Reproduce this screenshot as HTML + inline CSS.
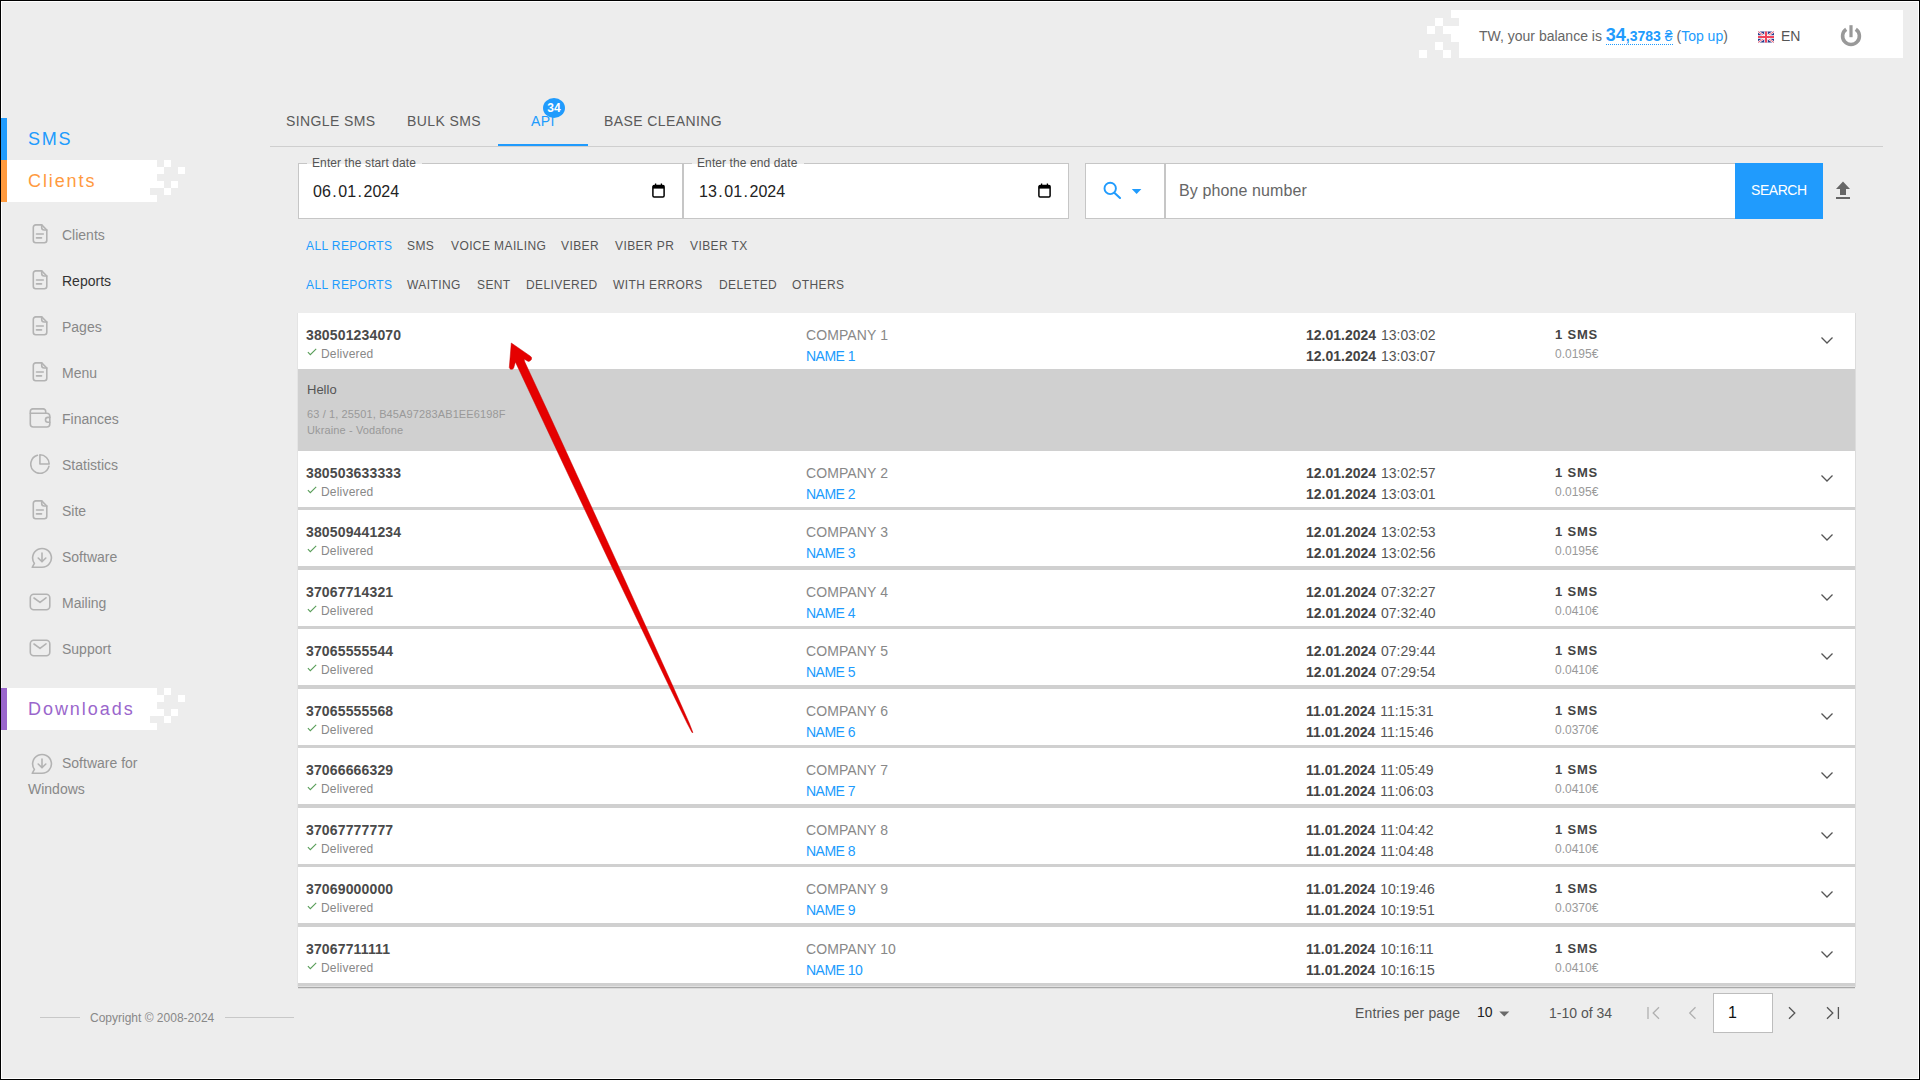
<!DOCTYPE html>
<html><head><meta charset="utf-8"><title>Reports</title>
<style>
*{margin:0;padding:0;box-sizing:border-box}
html,body{width:1920px;height:1080px;overflow:hidden;background:#ededed;font-family:"Liberation Sans",sans-serif}
.a{position:absolute}
.t{position:absolute;white-space:nowrap;line-height:1}
.frame{position:absolute;left:0;top:0;width:1920px;height:1080px;border:1px solid #000;pointer-events:none;z-index:50}
.bar{z-index:60}
.frame2{position:absolute;left:1px;top:1px;width:1918px;height:1078px;border:1px solid #fff;pointer-events:none;z-index:50}
.w{position:absolute;background:#fff}
.blue{color:#209bfd}
.menu{font-size:14px;color:#888}
.tab{font-size:14px;color:#5a5a5a;letter-spacing:.4px}
.flt{font-size:12px;color:#555;letter-spacing:.4px}
.row{position:absolute;left:298px;width:1557px;height:56px;background:#fff}
.sep{position:absolute;left:298px;width:1557px;height:3.5px;background:#d0d0d0}
.ph{font-size:14px;font-weight:bold;color:#4a4a4a;letter-spacing:.15px}
.dl{font-size:12px;color:#888;letter-spacing:.2px}
.co{font-size:14px;color:#888;letter-spacing:.1px}
.nm{font-size:14px;color:#209bfd;letter-spacing:-.5px}
.dt{font-size:14px;color:#555}
.dt b{color:#444}
.sm{font-size:13px;font-weight:bold;color:#444;letter-spacing:.8px}
.pr{font-size:12px;color:#999}
</style></head><body>
<div class="frame"></div><div class="frame2"></div>
<!-- top right balance -->
<div class="w" style="left:1459px;top:10px;width:444px;height:48px"></div>
<div class="w" style="left:1451px;top:10px;width:8px;height:8px"></div>
<div class="w" style="left:1435px;top:18px;width:8px;height:8px"></div>
<div class="w" style="left:1427px;top:26px;width:8px;height:8px"></div>
<div class="w" style="left:1443px;top:26px;width:16px;height:8px"></div>
<div class="w" style="left:1451px;top:34px;width:8px;height:8px"></div>
<div class="w" style="left:1435px;top:42px;width:8px;height:8px"></div>
<div class="w" style="left:1419px;top:50px;width:8px;height:8px"></div>
<div class="w" style="left:1443px;top:50px;width:8px;height:8px"></div>
<div class="t" style="left:1479px;top:28px;font-size:14px;line-height:14px;color:#666">TW, your balance is <span style="color:#209bfd;border-bottom:1px dotted #209bfd;padding-bottom:0"><b style="font-size:18px">34</b><b>,3783</b> ₴</span> (<span style="color:#209bfd">Top up</span>)</div>
<svg class="a" style="left:1758px;top:31px" width="16" height="12" viewBox="0 0 16 12">
<rect x="0" y="0.5" width="16" height="11" fill="#2b3a8c"/>
<path d="M0,0.5 L16,11.5 M16,0.5 L0,11.5" stroke="#fff" stroke-width="2.2"/>
<path d="M0,0.5 L16,11.5 M16,0.5 L0,11.5" stroke="#e8435a" stroke-width="0.8"/>
<path d="M8,0.5 V11.5 M0,6 H16" stroke="#fff" stroke-width="3.5"/>
<path d="M8,0.5 V11.5 M0,6 H16" stroke="#f0435a" stroke-width="2"/>
</svg>
<div class="t" style="left:1781px;top:29px;font-size:14px;color:#555">EN</div>
<svg class="a" style="left:1839px;top:23px" width="24" height="25" viewBox="0 0 24 25">
<path d="M7.2,6.2 A8.4,8.4 0 1 0 16.8,6.2" fill="none" stroke="#999" stroke-width="3.6"/>
<path d="M12,2.2 V14.2" stroke="#999" stroke-width="3.2"/>
</svg>

<!-- sidebar -->
<div class="a bar" style="left:1px;top:118px;width:6px;height:42px;background:#209bfd"></div>
<div class="t" style="left:28px;top:130px;font-size:18px;letter-spacing:1.8px;color:#209bfd">SMS</div>
<div class="a bar" style="left:1px;top:160px;width:6px;height:42px;background:#ff9a3e"></div>
<div class="w" style="left:7px;top:160px;width:150px;height:28px"></div>
<div class="w" style="left:7px;top:188px;width:143px;height:7px"></div>
<div class="w" style="left:7px;top:195px;width:150px;height:7px"></div>
<div class="w" style="left:164px;top:160px;width:7px;height:7px"></div>
<div class="w" style="left:157px;top:167px;width:7px;height:7px"></div>
<div class="w" style="left:178px;top:167px;width:7px;height:7px"></div>
<div class="w" style="left:157px;top:181px;width:7px;height:7px"></div>
<div class="w" style="left:171px;top:181px;width:7px;height:7px"></div>
<div class="w" style="left:164px;top:188px;width:7px;height:7px"></div>
<div class="t" style="left:28px;top:172px;font-size:18px;letter-spacing:1.9px;color:#ff9a3e">Clients</div>
<svg class="a" style="left:32px;top:224px" width="16" height="20" viewBox="0 0 16 20"><g fill="none" stroke="#b3b3b3" stroke-width="1.6" stroke-linecap="round" stroke-linejoin="round"><path d="M1.3,3.4 A2.5,2.5 0 0 1 3.8,0.9 H9.7 L14.8,6 V16.2 A2.5,2.5 0 0 1 12.3,18.7 H3.8 A2.5,2.5 0 0 1 1.3,16.2 Z"/><path d="M9.7,0.9 V3.5 A2.5,2.5 0 0 0 12.2,6 H14.8"/><path d="M4.5,10 H11.3 M4.5,13.9 H9.5"/></g></svg>
<div class="t menu" style="left:62px;top:228px;color:#888">Clients</div>
<svg class="a" style="left:32px;top:270px" width="16" height="20" viewBox="0 0 16 20"><g fill="none" stroke="#b3b3b3" stroke-width="1.6" stroke-linecap="round" stroke-linejoin="round"><path d="M1.3,3.4 A2.5,2.5 0 0 1 3.8,0.9 H9.7 L14.8,6 V16.2 A2.5,2.5 0 0 1 12.3,18.7 H3.8 A2.5,2.5 0 0 1 1.3,16.2 Z"/><path d="M9.7,0.9 V3.5 A2.5,2.5 0 0 0 12.2,6 H14.8"/><path d="M4.5,10 H11.3 M4.5,13.9 H9.5"/></g></svg>
<div class="t menu" style="left:62px;top:274px;color:#333">Reports</div>
<svg class="a" style="left:32px;top:316px" width="16" height="20" viewBox="0 0 16 20"><g fill="none" stroke="#b3b3b3" stroke-width="1.6" stroke-linecap="round" stroke-linejoin="round"><path d="M1.3,3.4 A2.5,2.5 0 0 1 3.8,0.9 H9.7 L14.8,6 V16.2 A2.5,2.5 0 0 1 12.3,18.7 H3.8 A2.5,2.5 0 0 1 1.3,16.2 Z"/><path d="M9.7,0.9 V3.5 A2.5,2.5 0 0 0 12.2,6 H14.8"/><path d="M4.5,10 H11.3 M4.5,13.9 H9.5"/></g></svg>
<div class="t menu" style="left:62px;top:320px;color:#888">Pages</div>
<svg class="a" style="left:32px;top:362px" width="16" height="20" viewBox="0 0 16 20"><g fill="none" stroke="#b3b3b3" stroke-width="1.6" stroke-linecap="round" stroke-linejoin="round"><path d="M1.3,3.4 A2.5,2.5 0 0 1 3.8,0.9 H9.7 L14.8,6 V16.2 A2.5,2.5 0 0 1 12.3,18.7 H3.8 A2.5,2.5 0 0 1 1.3,16.2 Z"/><path d="M9.7,0.9 V3.5 A2.5,2.5 0 0 0 12.2,6 H14.8"/><path d="M4.5,10 H11.3 M4.5,13.9 H9.5"/></g></svg>
<div class="t menu" style="left:62px;top:366px;color:#888">Menu</div>
<svg class="a" style="left:29px;top:408px" width="22" height="20" viewBox="0 0 22 20"><g fill="none" stroke="#b3b3b3" stroke-width="1.6" stroke-linecap="round" stroke-linejoin="round"><path d="M1.3,5.2 V16 A3,3 0 0 0 4.3,19 H17.8 A3,3 0 0 0 20.8,16 V8 A3,3 0 0 0 17.8,5.2 H1.3"/><path d="M1.3,5.2 V3.4 A2.5,2.5 0 0 1 3.8,0.9 H14.2 A2.5,2.5 0 0 1 16.7,3.4 V5.2"/><path d="M20.8,9.4 H18.9 A2.4,2.4 0 0 0 18.9,14.2 H20.8"/></g></svg>
<div class="t menu" style="left:62px;top:412px;color:#888">Finances</div>
<svg class="a" style="left:30px;top:454px" width="20" height="20" viewBox="0 0 20 20"><g fill="none" stroke="#b3b3b3" stroke-width="1.6" stroke-linecap="round" stroke-linejoin="round"><path d="M7.4,1.3 A9.2,9.2 0 1 0 18.9,12.4"/><path d="M9.9,0.8 V10 H19.2 A9.3,9.3 0 0 0 9.9,0.8 Z"/></g></svg>
<div class="t menu" style="left:62px;top:458px;color:#888">Statistics</div>
<svg class="a" style="left:32px;top:500px" width="16" height="20" viewBox="0 0 16 20"><g fill="none" stroke="#b3b3b3" stroke-width="1.6" stroke-linecap="round" stroke-linejoin="round"><path d="M1.3,3.4 A2.5,2.5 0 0 1 3.8,0.9 H9.7 L14.8,6 V16.2 A2.5,2.5 0 0 1 12.3,18.7 H3.8 A2.5,2.5 0 0 1 1.3,16.2 Z"/><path d="M9.7,0.9 V3.5 A2.5,2.5 0 0 0 12.2,6 H14.8"/><path d="M4.5,10 H11.3 M4.5,13.9 H9.5"/></g></svg>
<div class="t menu" style="left:62px;top:504px;color:#888">Site</div>
<svg class="a" style="left:31px;top:547px" width="22" height="22" viewBox="0 0 22 22"><g fill="none" stroke="#b3b3b3" stroke-width="1.6" stroke-linecap="round" stroke-linejoin="round"><path d="M11,20.3 A9.4,9.4 0 1 0 3.4,16.4 L1.2,20.3 Z"/><path d="M11,6 V14.6 M7.2,11 L11,14.8 L14.8,11"/></g></svg>
<div class="t menu" style="left:62px;top:550px;color:#888">Software</div>
<svg class="a" style="left:29px;top:593px" width="22" height="18" viewBox="0 0 22 18"><g fill="none" stroke="#b3b3b3" stroke-width="1.6" stroke-linecap="round" stroke-linejoin="round"><rect x="1.3" y="1.2" width="19.5" height="15.6" rx="3.5"/><path d="M5,5 L11,9.4 L17,4.8"/></g></svg>
<div class="t menu" style="left:62px;top:596px;color:#888">Mailing</div>
<svg class="a" style="left:29px;top:639px" width="22" height="18" viewBox="0 0 22 18"><g fill="none" stroke="#b3b3b3" stroke-width="1.6" stroke-linecap="round" stroke-linejoin="round"><rect x="1.3" y="1.2" width="19.5" height="15.6" rx="3.5"/><path d="M5,5 L11,9.4 L17,4.8"/></g></svg>
<div class="t menu" style="left:62px;top:642px;color:#888">Support</div>
<div class="a bar" style="left:1px;top:688px;width:6px;height:42px;background:#9a66cc"></div>
<div class="w" style="left:7px;top:688px;width:150px;height:28px"></div>
<div class="w" style="left:7px;top:716px;width:143px;height:7px"></div>
<div class="w" style="left:7px;top:723px;width:150px;height:7px"></div>
<div class="w" style="left:164px;top:688px;width:7px;height:7px"></div>
<div class="w" style="left:157px;top:695px;width:7px;height:7px"></div>
<div class="w" style="left:178px;top:695px;width:7px;height:7px"></div>
<div class="w" style="left:157px;top:709px;width:7px;height:7px"></div>
<div class="w" style="left:171px;top:709px;width:7px;height:7px"></div>
<div class="w" style="left:164px;top:716px;width:7px;height:7px"></div>
<div class="t" style="left:28px;top:700px;font-size:18px;letter-spacing:1.95px;color:#9a66cc">Downloads</div>
<svg class="a" style="left:31px;top:753px" width="22" height="22" viewBox="0 0 22 22"><g fill="none" stroke="#b3b3b3" stroke-width="1.6" stroke-linecap="round" stroke-linejoin="round"><path d="M11,20.3 A9.4,9.4 0 1 0 3.4,16.4 L1.2,20.3 Z"/><path d="M11,6 V14.6 M7.2,11 L11,14.8 L14.8,11"/></g></svg>
<div class="t menu" style="left:62px;top:756px">Software for</div>
<div class="t menu" style="left:28px;top:782px">Windows</div>
<div class="a" style="left:40px;top:1017px;width:40px;height:1px;background:#c8c8c8"></div>
<div class="a" style="left:225px;top:1017px;width:69px;height:1px;background:#c8c8c8"></div>
<div class="t" style="left:90px;top:1012px;font-size:12px;color:#888">Copyright © 2008-2024</div>
<!-- tabs -->
<div class="t tab" style="left:286px;top:114px">SINGLE SMS</div>
<div class="t tab" style="left:407px;top:114px">BULK SMS</div>
<div class="t tab" style="left:531px;top:114px;color:#209bfd">API</div>
<div class="t tab" style="left:604px;top:114px">BASE CLEANING</div>
<div class="a" style="left:543px;top:98px;width:22px;height:20px;border-radius:50%;background:#209bfd"></div>
<div class="t" style="left:543px;top:102px;width:22px;text-align:center;font-size:12px;font-weight:bold;color:#fff">34</div>
<div class="a" style="left:270px;top:146px;width:1613px;height:1px;background:#cfcfcf"></div>
<div class="a" style="left:498px;top:144px;width:90px;height:2px;background:#209bfd"></div>

<!-- date inputs -->
<div class="a" style="left:298px;top:163px;width:385px;height:56px;background:#fff;border:1px solid #c6c6c6"></div>
<div class="a" style="left:683px;top:163px;width:386px;height:56px;background:#fff;border:1px solid #c6c6c6"></div>
<div class="a" style="left:307px;top:158px;width:115px;height:6px;background:#ededed"></div>
<div class="a" style="left:307px;top:164px;width:115px;height:4px;background:#fff"></div>
<div class="a" style="left:692px;top:158px;width:112px;height:6px;background:#ededed"></div>
<div class="a" style="left:692px;top:164px;width:112px;height:4px;background:#fff"></div>
<div class="t" style="left:312px;top:157px;font-size:12px;color:#555;letter-spacing:.1px">Enter the start date</div>
<div class="t" style="left:697px;top:157px;font-size:12px;color:#555;letter-spacing:.1px">Enter the end date</div>
<div class="t" style="left:313px;top:184px;font-size:16px;color:#222">06<span style="padding:0 1.5px">.</span>01<span style="padding:0 1.5px">.</span>2024</div>
<div class="t" style="left:699px;top:184px;font-size:16px;color:#222">13<span style="padding:0 1.5px">.</span>01<span style="padding:0 1.5px">.</span>2024</div>
<svg class="a" style="left:652px;top:183px" width="14" height="15" viewBox="0 0 14 15"><path d="M2.1,2.6 H10.9 A1.2,1.2 0 0 1 12.1,3.8 V12.8 A1.2,1.2 0 0 1 10.9,14 H2.1 A1.2,1.2 0 0 1 0.9,12.8 V3.8 A1.2,1.2 0 0 1 2.1,2.6 Z" fill="none" stroke="#000" stroke-width="1.5"/><rect x="0.9" y="2.6" width="11.2" height="3" fill="#000"/><path d="M3.6,0.4 V2.8 M9.4,0.4 V2.8" stroke="#000" stroke-width="1.3"/></svg>
<svg class="a" style="left:1038px;top:183px" width="14" height="15" viewBox="0 0 14 15"><path d="M2.1,2.6 H10.9 A1.2,1.2 0 0 1 12.1,3.8 V12.8 A1.2,1.2 0 0 1 10.9,14 H2.1 A1.2,1.2 0 0 1 0.9,12.8 V3.8 A1.2,1.2 0 0 1 2.1,2.6 Z" fill="none" stroke="#000" stroke-width="1.5"/><rect x="0.9" y="2.6" width="11.2" height="3" fill="#000"/><path d="M3.6,0.4 V2.8 M9.4,0.4 V2.8" stroke="#000" stroke-width="1.3"/></svg>

<!-- search -->
<div class="a" style="left:1085px;top:163px;width:80px;height:56px;background:#fff;border:1px solid #c6c6c6"></div>
<div class="a" style="left:1165px;top:163px;width:571px;height:56px;background:#fff;border:1px solid #c6c6c6;border-right:0"></div>
<svg class="a" style="left:1101px;top:180px" width="22" height="20" viewBox="0 0 22 20"><circle cx="9.2" cy="8.4" r="5.7" fill="none" stroke="#209bfd" stroke-width="1.9"/><path d="M13.6,12.9 L19,18" stroke="#209bfd" stroke-width="2.1" stroke-linecap="round"/></svg>
<svg class="a" style="left:1131px;top:188px" width="11" height="7" viewBox="0 0 11 7"><path d="M0.8,1 H10.4 L5.6,5.9 Z" fill="#209bfd"/></svg>
<div class="t" style="left:1179px;top:183px;font-size:16px;color:#666;letter-spacing:.1px">By phone number</div>
<div class="a" style="left:1735px;top:163px;width:88px;height:56px;background:#209bfd"></div>
<div class="t" style="left:1751px;top:183px;font-size:14px;color:#fff;letter-spacing:-.45px">SEARCH</div>
<svg class="a" style="left:1834px;top:180px" width="18" height="21" viewBox="0 0 18 21"><path d="M9,1.5 L16,9 H12 V15 H6 V9 H2 Z" fill="#666"/><path d="M2,18 H16" stroke="#666" stroke-width="2"/></svg>

<!-- filters -->
<div class="t flt" style="left:306px;top:240px;color:#209bfd">ALL REPORTS</div>
<div class="t flt" style="left:407px;top:240px">SMS</div>
<div class="t flt" style="left:451px;top:240px">VOICE MAILING</div>
<div class="t flt" style="left:561px;top:240px">VIBER</div>
<div class="t flt" style="left:615px;top:240px">VIBER PR</div>
<div class="t flt" style="left:690px;top:240px">VIBER TX</div>
<div class="t flt" style="left:306px;top:279px;color:#209bfd">ALL REPORTS</div>
<div class="t flt" style="left:407px;top:279px">WAITING</div>
<div class="t flt" style="left:477px;top:279px">SENT</div>
<div class="t flt" style="left:526px;top:279px">DELIVERED</div>
<div class="t flt" style="left:613px;top:279px">WITH ERRORS</div>
<div class="t flt" style="left:719px;top:279px">DELETED</div>
<div class="t flt" style="left:792px;top:279px">OTHERS</div>
<div class="row" style="top:313px"></div>
<div class="t ph" style="left:306px;top:328px">380501234070</div>
<svg class="a" style="left:307px;top:348px" width="10" height="8" viewBox="0 0 10 8"><path d="M0.9,4.2 L3.3,6.7 L9.2,0.8" fill="none" stroke="#5a9e5a" stroke-width="1.1"/></svg>
<div class="t dl" style="left:321px;top:348px">Delivered</div>
<div class="t co" style="left:806px;top:328px">COMPANY 1</div>
<div class="t nm" style="left:806px;top:349px">NAME 1</div>
<div class="t dt" style="left:1306px;top:328px"><b>12.01.2024</b>&nbsp;<span style="margin-left:1px"></span>13:03:02</div>
<div class="t dt" style="left:1306px;top:349px"><b>12.01.2024</b>&nbsp;<span style="margin-left:1px"></span>13:03:07</div>
<div class="t sm" style="left:1555px;top:328px">1 SMS</div>
<div class="t pr" style="left:1555px;top:348px">0.0195€</div>
<svg class="a" style="left:1820px;top:336px" width="14" height="9" viewBox="0 0 14 9"><path d="M1.5,1.5 L7,7 L12.5,1.5" fill="none" stroke="#555" stroke-width="1.3"/></svg>
<div class="row" style="top:450.5px"></div>
<div class="sep" style="top:506.5px"></div>
<div class="t ph" style="left:306px;top:465.5px">380503633333</div>
<svg class="a" style="left:307px;top:485.5px" width="10" height="8" viewBox="0 0 10 8"><path d="M0.9,4.2 L3.3,6.7 L9.2,0.8" fill="none" stroke="#5a9e5a" stroke-width="1.1"/></svg>
<div class="t dl" style="left:321px;top:485.5px">Delivered</div>
<div class="t co" style="left:806px;top:465.5px">COMPANY 2</div>
<div class="t nm" style="left:806px;top:486.5px">NAME 2</div>
<div class="t dt" style="left:1306px;top:465.5px"><b>12.01.2024</b>&nbsp;<span style="margin-left:1px"></span>13:02:57</div>
<div class="t dt" style="left:1306px;top:486.5px"><b>12.01.2024</b>&nbsp;<span style="margin-left:1px"></span>13:03:01</div>
<div class="t sm" style="left:1555px;top:465.5px">1 SMS</div>
<div class="t pr" style="left:1555px;top:485.5px">0.0195€</div>
<svg class="a" style="left:1820px;top:473.5px" width="14" height="9" viewBox="0 0 14 9"><path d="M1.5,1.5 L7,7 L12.5,1.5" fill="none" stroke="#555" stroke-width="1.3"/></svg>
<div class="row" style="top:510.0px"></div>
<div class="sep" style="top:566.0px"></div>
<div class="t ph" style="left:306px;top:525.0px">380509441234</div>
<svg class="a" style="left:307px;top:545.0px" width="10" height="8" viewBox="0 0 10 8"><path d="M0.9,4.2 L3.3,6.7 L9.2,0.8" fill="none" stroke="#5a9e5a" stroke-width="1.1"/></svg>
<div class="t dl" style="left:321px;top:545.0px">Delivered</div>
<div class="t co" style="left:806px;top:525.0px">COMPANY 3</div>
<div class="t nm" style="left:806px;top:546.0px">NAME 3</div>
<div class="t dt" style="left:1306px;top:525.0px"><b>12.01.2024</b>&nbsp;<span style="margin-left:1px"></span>13:02:53</div>
<div class="t dt" style="left:1306px;top:546.0px"><b>12.01.2024</b>&nbsp;<span style="margin-left:1px"></span>13:02:56</div>
<div class="t sm" style="left:1555px;top:525.0px">1 SMS</div>
<div class="t pr" style="left:1555px;top:545px">0.0195€</div>
<svg class="a" style="left:1820px;top:533.0px" width="14" height="9" viewBox="0 0 14 9"><path d="M1.5,1.5 L7,7 L12.5,1.5" fill="none" stroke="#555" stroke-width="1.3"/></svg>
<div class="row" style="top:569.5px"></div>
<div class="sep" style="top:625.5px"></div>
<div class="t ph" style="left:306px;top:584.5px">37067714321</div>
<svg class="a" style="left:307px;top:604.5px" width="10" height="8" viewBox="0 0 10 8"><path d="M0.9,4.2 L3.3,6.7 L9.2,0.8" fill="none" stroke="#5a9e5a" stroke-width="1.1"/></svg>
<div class="t dl" style="left:321px;top:604.5px">Delivered</div>
<div class="t co" style="left:806px;top:584.5px">COMPANY 4</div>
<div class="t nm" style="left:806px;top:605.5px">NAME 4</div>
<div class="t dt" style="left:1306px;top:584.5px"><b>12.01.2024</b>&nbsp;<span style="margin-left:1px"></span>07:32:27</div>
<div class="t dt" style="left:1306px;top:605.5px"><b>12.01.2024</b>&nbsp;<span style="margin-left:1px"></span>07:32:40</div>
<div class="t sm" style="left:1555px;top:584.5px">1 SMS</div>
<div class="t pr" style="left:1555px;top:604.5px">0.0410€</div>
<svg class="a" style="left:1820px;top:592.5px" width="14" height="9" viewBox="0 0 14 9"><path d="M1.5,1.5 L7,7 L12.5,1.5" fill="none" stroke="#555" stroke-width="1.3"/></svg>
<div class="row" style="top:629.0px"></div>
<div class="sep" style="top:685.0px"></div>
<div class="t ph" style="left:306px;top:644.0px">37065555544</div>
<svg class="a" style="left:307px;top:664.0px" width="10" height="8" viewBox="0 0 10 8"><path d="M0.9,4.2 L3.3,6.7 L9.2,0.8" fill="none" stroke="#5a9e5a" stroke-width="1.1"/></svg>
<div class="t dl" style="left:321px;top:664.0px">Delivered</div>
<div class="t co" style="left:806px;top:644.0px">COMPANY 5</div>
<div class="t nm" style="left:806px;top:665.0px">NAME 5</div>
<div class="t dt" style="left:1306px;top:644.0px"><b>12.01.2024</b>&nbsp;<span style="margin-left:1px"></span>07:29:44</div>
<div class="t dt" style="left:1306px;top:665.0px"><b>12.01.2024</b>&nbsp;<span style="margin-left:1px"></span>07:29:54</div>
<div class="t sm" style="left:1555px;top:644.0px">1 SMS</div>
<div class="t pr" style="left:1555px;top:664px">0.0410€</div>
<svg class="a" style="left:1820px;top:652.0px" width="14" height="9" viewBox="0 0 14 9"><path d="M1.5,1.5 L7,7 L12.5,1.5" fill="none" stroke="#555" stroke-width="1.3"/></svg>
<div class="row" style="top:688.5px"></div>
<div class="sep" style="top:744.5px"></div>
<div class="t ph" style="left:306px;top:703.5px">37065555568</div>
<svg class="a" style="left:307px;top:723.5px" width="10" height="8" viewBox="0 0 10 8"><path d="M0.9,4.2 L3.3,6.7 L9.2,0.8" fill="none" stroke="#5a9e5a" stroke-width="1.1"/></svg>
<div class="t dl" style="left:321px;top:723.5px">Delivered</div>
<div class="t co" style="left:806px;top:703.5px">COMPANY 6</div>
<div class="t nm" style="left:806px;top:724.5px">NAME 6</div>
<div class="t dt" style="left:1306px;top:703.5px"><b>11.01.2024</b>&nbsp;<span style="margin-left:1px"></span>11:15:31</div>
<div class="t dt" style="left:1306px;top:724.5px"><b>11.01.2024</b>&nbsp;<span style="margin-left:1px"></span>11:15:46</div>
<div class="t sm" style="left:1555px;top:703.5px">1 SMS</div>
<div class="t pr" style="left:1555px;top:723.5px">0.0370€</div>
<svg class="a" style="left:1820px;top:711.5px" width="14" height="9" viewBox="0 0 14 9"><path d="M1.5,1.5 L7,7 L12.5,1.5" fill="none" stroke="#555" stroke-width="1.3"/></svg>
<div class="row" style="top:748.0px"></div>
<div class="sep" style="top:804.0px"></div>
<div class="t ph" style="left:306px;top:763.0px">37066666329</div>
<svg class="a" style="left:307px;top:783.0px" width="10" height="8" viewBox="0 0 10 8"><path d="M0.9,4.2 L3.3,6.7 L9.2,0.8" fill="none" stroke="#5a9e5a" stroke-width="1.1"/></svg>
<div class="t dl" style="left:321px;top:783.0px">Delivered</div>
<div class="t co" style="left:806px;top:763.0px">COMPANY 7</div>
<div class="t nm" style="left:806px;top:784.0px">NAME 7</div>
<div class="t dt" style="left:1306px;top:763.0px"><b>11.01.2024</b>&nbsp;<span style="margin-left:1px"></span>11:05:49</div>
<div class="t dt" style="left:1306px;top:784.0px"><b>11.01.2024</b>&nbsp;<span style="margin-left:1px"></span>11:06:03</div>
<div class="t sm" style="left:1555px;top:763.0px">1 SMS</div>
<div class="t pr" style="left:1555px;top:783px">0.0410€</div>
<svg class="a" style="left:1820px;top:771.0px" width="14" height="9" viewBox="0 0 14 9"><path d="M1.5,1.5 L7,7 L12.5,1.5" fill="none" stroke="#555" stroke-width="1.3"/></svg>
<div class="row" style="top:807.5px"></div>
<div class="sep" style="top:863.5px"></div>
<div class="t ph" style="left:306px;top:822.5px">37067777777</div>
<svg class="a" style="left:307px;top:842.5px" width="10" height="8" viewBox="0 0 10 8"><path d="M0.9,4.2 L3.3,6.7 L9.2,0.8" fill="none" stroke="#5a9e5a" stroke-width="1.1"/></svg>
<div class="t dl" style="left:321px;top:842.5px">Delivered</div>
<div class="t co" style="left:806px;top:822.5px">COMPANY 8</div>
<div class="t nm" style="left:806px;top:843.5px">NAME 8</div>
<div class="t dt" style="left:1306px;top:822.5px"><b>11.01.2024</b>&nbsp;<span style="margin-left:1px"></span>11:04:42</div>
<div class="t dt" style="left:1306px;top:843.5px"><b>11.01.2024</b>&nbsp;<span style="margin-left:1px"></span>11:04:48</div>
<div class="t sm" style="left:1555px;top:822.5px">1 SMS</div>
<div class="t pr" style="left:1555px;top:842.5px">0.0410€</div>
<svg class="a" style="left:1820px;top:830.5px" width="14" height="9" viewBox="0 0 14 9"><path d="M1.5,1.5 L7,7 L12.5,1.5" fill="none" stroke="#555" stroke-width="1.3"/></svg>
<div class="row" style="top:867.0px"></div>
<div class="sep" style="top:923.0px"></div>
<div class="t ph" style="left:306px;top:882.0px">37069000000</div>
<svg class="a" style="left:307px;top:902.0px" width="10" height="8" viewBox="0 0 10 8"><path d="M0.9,4.2 L3.3,6.7 L9.2,0.8" fill="none" stroke="#5a9e5a" stroke-width="1.1"/></svg>
<div class="t dl" style="left:321px;top:902.0px">Delivered</div>
<div class="t co" style="left:806px;top:882.0px">COMPANY 9</div>
<div class="t nm" style="left:806px;top:903.0px">NAME 9</div>
<div class="t dt" style="left:1306px;top:882.0px"><b>11.01.2024</b>&nbsp;<span style="margin-left:1px"></span>10:19:46</div>
<div class="t dt" style="left:1306px;top:903.0px"><b>11.01.2024</b>&nbsp;<span style="margin-left:1px"></span>10:19:51</div>
<div class="t sm" style="left:1555px;top:882.0px">1 SMS</div>
<div class="t pr" style="left:1555px;top:902px">0.0370€</div>
<svg class="a" style="left:1820px;top:890.0px" width="14" height="9" viewBox="0 0 14 9"><path d="M1.5,1.5 L7,7 L12.5,1.5" fill="none" stroke="#555" stroke-width="1.3"/></svg>
<div class="row" style="top:926.5px"></div>
<div class="sep" style="top:982.5px"></div>
<div class="t ph" style="left:306px;top:941.5px">37067711111</div>
<svg class="a" style="left:307px;top:961.5px" width="10" height="8" viewBox="0 0 10 8"><path d="M0.9,4.2 L3.3,6.7 L9.2,0.8" fill="none" stroke="#5a9e5a" stroke-width="1.1"/></svg>
<div class="t dl" style="left:321px;top:961.5px">Delivered</div>
<div class="t co" style="left:806px;top:941.5px">COMPANY 10</div>
<div class="t nm" style="left:806px;top:962.5px">NAME 10</div>
<div class="t dt" style="left:1306px;top:941.5px"><b>11.01.2024</b>&nbsp;<span style="margin-left:1px"></span>10:16:11</div>
<div class="t dt" style="left:1306px;top:962.5px"><b>11.01.2024</b>&nbsp;<span style="margin-left:1px"></span>10:16:15</div>
<div class="t sm" style="left:1555px;top:941.5px">1 SMS</div>
<div class="t pr" style="left:1555px;top:961.5px">0.0410€</div>
<svg class="a" style="left:1820px;top:949.5px" width="14" height="9" viewBox="0 0 14 9"><path d="M1.5,1.5 L7,7 L12.5,1.5" fill="none" stroke="#555" stroke-width="1.3"/></svg>
<div class="a" style="left:298px;top:369px;width:1557px;height:81.5px;background:#d0d0d0"></div>
<div class="a" style="left:298px;top:983px;width:1557px;height:3px;background:#d0d0d0"></div>
<div class="a" style="left:298px;top:986px;width:1557px;height:1px;background:#e0e0e0"></div>
<div class="a" style="left:298px;top:987px;width:1557px;height:1px;background:#a8a8a8"></div>
<div class="a" style="left:298px;top:988px;width:1557px;height:1px;background:#dcdcdc"></div>

<div class="t" style="left:307px;top:383px;font-size:13px;color:#555">Hello</div>
<div class="t" style="left:307px;top:409px;font-size:11px;color:#999;letter-spacing:.12px">63 / 1, 25501, B45A97283AB1EE6198F</div>
<div class="t" style="left:307px;top:425px;font-size:11px;color:#999;letter-spacing:.12px">Ukraine - Vodafone</div>
<div class="a" style="left:1855px;top:313px;width:1px;height:674px;background:#dcdcdc"></div>
<div class="a" style="left:297px;top:313px;width:1px;height:674px;background:#e4e4e4"></div>
<div class="t" style="left:1355px;top:1006px;font-size:14px;color:#555;letter-spacing:.15px">Entries per page</div>
<div class="t" style="left:1477px;top:1005px;font-size:14px;color:#222">10</div>
<svg class="a" style="left:1499px;top:1011px" width="12" height="6" viewBox="0 0 12 6"><path d="M0.3,0.5 H10.3 L5.3,5.5 Z" fill="#6a6a6a"/></svg>
<div class="t" style="left:1549px;top:1006px;font-size:14px;color:#555">1-10 of 34</div>
<svg class="a" style="left:1645px;top:1005px" width="18" height="16" viewBox="0 0 18 16"><path d="M3,2 V14" stroke="#b0b0b0" stroke-width="1.3"/><path d="M14,2.2 L8.2,8 L14,13.8" fill="none" stroke="#b0b0b0" stroke-width="1.3"/></svg>
<svg class="a" style="left:1686px;top:1005px" width="12" height="16" viewBox="0 0 12 16"><path d="M9.5,2.2 L3.7,8 L9.5,13.8" fill="none" stroke="#b0b0b0" stroke-width="1.3"/></svg>
<div class="a" style="left:1713px;top:993px;width:60px;height:40px;background:#fff;border:1px solid #bdbdbd"></div>
<div class="t" style="left:1728px;top:1005px;font-size:16px;color:#111">1</div>
<svg class="a" style="left:1786px;top:1005px" width="12" height="16" viewBox="0 0 12 16"><path d="M3,2.2 L8.8,8 L3,13.8" fill="none" stroke="#555" stroke-width="1.3"/></svg>
<svg class="a" style="left:1823px;top:1005px" width="18" height="16" viewBox="0 0 18 16"><path d="M4,2.2 L9.8,8 L4,13.8" fill="none" stroke="#555" stroke-width="1.3"/><path d="M15.4,2 V14" stroke="#555" stroke-width="1.3"/></svg>
<svg class="a" style="left:0;top:0;z-index:40" width="1920" height="1080" viewBox="0 0 1920 1080"><polygon points="515.4,362.0 537.9,410.0 570.8,480.0 608.6,560.0 647.0,640.0 669.0,686.0 687.0,723.0 692.0,732.5 692.9,732.5 689.2,723.0 672.8,686.0 652.0,640.0 615.8,560.0 579.2,480.0 547.1,410.0 524.8,362.0 524.0,359.0 528.3,361.4 529.9,361.0 531.4,359.6 531.6,357.6 530.4,356.2 511.3,343.0 509.3,367.6 510.4,369.2 512.2,369.3 513.6,368.2" fill="#e50000" stroke="#c80000" stroke-width="0.5" stroke-linejoin="round"/></svg>
</body></html>
